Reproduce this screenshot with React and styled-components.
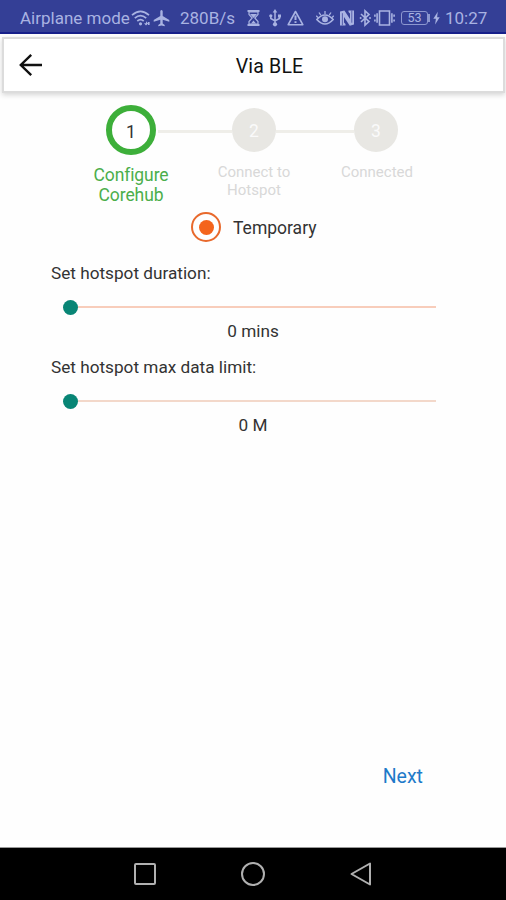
import styled, {createGlobalStyle} from 'styled-components';

const App = () => {
    return(
        <Screen>
            <GlobalStyle />
            <StatusBar />
            <Header>
                <HeaderCard>
                    <BackButton aria-label="Back">
                        <svg width="24" height="24" viewBox="0 0 24 24">
                            <path d="M23 12H2M12.2 1.8L1.8 12l10.4 10.2" fill="none" stroke="#111" strokeWidth="2.4" />
                        </svg>
                    </BackButton>
                    <Title>Via BLE</Title>
                </HeaderCard>
            </Header>
            <Content>
                <Stepper>
                    <Step>
                        <StepTrack>
                            <Line $hidden />
                            <StepCircle $active>1</StepCircle>
                            <Line $gap />
                        </StepTrack>
                        <StepLabel $active>Configure<br />Corehub</StepLabel>
                    </Step>
                    <Step>
                        <StepTrack>
                            <Line />
                            <StepCircle>2</StepCircle>
                            <Line />
                        </StepTrack>
                        <StepLabel>Connect to<br />Hotspot</StepLabel>
                    </Step>
                    <Step>
                        <StepTrack>
                            <Line />
                            <StepCircle>3</StepCircle>
                            <Line $hidden />
                        </StepTrack>
                        <StepLabel>Connected</StepLabel>
                    </Step>
                </Stepper>
                <RadioRow>
                    <Radio><Dot /></Radio>
                    <RadioLabel>Temporary</RadioLabel>
                </RadioRow>
                <SliderField label="Set hotspot duration:" value="0 mins" color="#f8cdbb" />
                <SliderField label="Set hotspot max data limit:" value="0 M" color="#f3d8ca" />
                <NextButton>Next</NextButton>
            </Content>
            <NavBar>
                <svg width="24" height="26" viewBox="0 0 24 26">
                    <rect x="2" y="3" width="20" height="20" rx="1" />
                </svg>
                <svg width="26" height="26" viewBox="0 0 26 26">
                    <circle cx="13" cy="13" r="11" />
                </svg>
                <svg width="24" height="26" viewBox="0 0 24 26">
                    <path d="M21 2.5v21L2.5 13z" />
                </svg>
            </NavBar>
        </Screen>
    );
}

const SliderField = ({label, value, color}) => {
    return(
        <Field>
            <FieldLabel>{label}</FieldLabel>
            <Slider>
                <Thumb />
                <Track $color={color} />
            </Slider>
            <FieldValue>{value}</FieldValue>
        </Field>
    );
}

const StatusBar = () => {
    return(
        <Status>
            <StatusText $width="111px">Airplane mode</StatusText>
            {/* wifi */}
            <StatusIcon width="20" height="18" viewBox="0 0 20 18">
                <g fill="none" stroke="currentColor" strokeWidth="1.7">
                    <path d="M1 6.2Q9.5 -1.6 18 6.2" />
                    <path d="M3.8 9.2Q9.5 4 15.2 9.2" />
                    <path d="M6.3 12Q9.5 9.2 12.7 12" />
                </g>
                <circle cx="9.5" cy="14.8" r="1.6" />
                <path d="M13 14.2h2v-2l2.2 2.2-2.2 2.2zM17 13h1.6v3H17z" />
            </StatusIcon>
            {/* airplane */}
            <StatusIcon $left="2px" width="17" height="18" viewBox="0 0 17 18">
                <path d="M8.5 1C7.7 1 7.3 1.8 7.3 2.6v4.3L.7 11v1.8l6.6-2v3.7l-2 1.5v1.3l3.2-.8 3.2.8V16l-2-1.5v-3.7l6.6 2V11L9.7 6.9V2.6C9.7 1.8 9.3 1 8.5 1z" />
            </StatusIcon>
            <StatusText $left="10px" $width="58px">280B/s</StatusText>
            {/* hourglass */}
            <StatusIcon $left="9px" width="13" height="18" viewBox="0 0 13 18">
                <path d="M.5 1h12v2H.5zM.5 15h12v2H.5z" />
                <path d="M2 3v2.4L5.2 9 2 12.6V15h9v-2.4L7.8 9 11 5.4V3z" fill="none" stroke="currentColor" strokeWidth="1.2" />
                <path d="M3 5h7L6.5 9zM6.5 11.5L9 14.5H4z" />
            </StatusIcon>
            {/* usb */}
            <StatusIcon $left="9px" width="12" height="18" viewBox="0 0 12 18">
                <path d="M6 0l2.3 3.6H3.7zM9 5.4h3v3.2H9z" />
                <circle cx="1.8" cy="6.8" r="1.6" />
                <circle cx="6" cy="15.3" r="2.1" />
                <path d="M6 3v12M1.8 7v2.5L6 12l4.5-2.5V7" fill="none" stroke="currentColor" strokeWidth="1.5" />
            </StatusIcon>
            {/* warning */}
            <StatusIcon $left="6px" width="17" height="18" viewBox="0 0 17 18">
                <path d="M8.5 2.5L1.2 15.7h14.6z" fill="none" stroke="currentColor" strokeWidth="1.6" strokeLinejoin="round" />
                <path d="M7.5 6.5h2V11h-2zM7.5 12.2h2V14h-2z" />
            </StatusIcon>
            {/* eye */}
            <StatusIcon $left="12px" width="18" height="18" viewBox="0 0 18 18">
                <path d="M.8 10.5Q9 1.5 17.2 10.5 9 19.5.8 10.5z" fill="none" stroke="currentColor" strokeWidth="1.6" />
                <circle cx="9" cy="10.3" r="3" />
                <path d="M9 5V2M4.8 6.2L3 3.5M13.2 6.2L15 3.5M2 8.6L.3 6.8M16 8.6l1.7-1.8" stroke="currentColor" strokeWidth="1.3" />
            </StatusIcon>
            {/* nfc */}
            <StatusIcon $left="5px" width="16" height="18" viewBox="0 0 16 18">
                <path d="M1 2.5L5.4 1.5 11 10V4.6L9.5 3V1.5H15v14L10.8 16.8 5 8v5.5L6.5 15v1.5H1z" />
                <path d="M3.4 4.2v12M12.8 1.5v12.2" stroke="#343f96" strokeWidth=".7" />
            </StatusIcon>
            {/* bluetooth */}
            <StatusIcon $left="4px" width="13" height="18" viewBox="0 0 13 18">
                <path d="M2 5l8 7.6L6 16.2V1.8l4 3.6L2 13" fill="none" stroke="currentColor" strokeWidth="1.6" />
                <circle cx="1.6" cy="9" r="1" />
                <circle cx="11" cy="9" r="1" />
            </StatusIcon>
            {/* vibrate */}
            <StatusIcon $left="2px" width="21" height="18" viewBox="0 0 21 18">
                <path d="M5.5 2h10v14h-10zM3.1 4.2v9.6M.9 5.6v2.2M.9 10.4v2.2M17.9 4.2v9.6M20.1 5.6v2.2M20.1 10.4v2.2" fill="none" stroke="currentColor" strokeWidth="1.6" />
            </StatusIcon>
            <Battery>53</Battery>
            <BatteryTip />
            {/* charging bolt */}
            <StatusIcon $left="3px" width="7" height="18" viewBox="0 0 7 18">
                <path d="M4.8 2.8L.3 9.8h2.6l-.8 5.8 4.6-7.4H4.1z" />
            </StatusIcon>
            <StatusText $left="5px">10:27</StatusText>
        </Status>
    );
}

const GlobalStyle = createGlobalStyle`
    body {
        margin: 0;
        background: #fff;
        font-family: Roboto, "Liberation Sans", sans-serif;
    }
    * {
        box-sizing: border-box;
    }
    button {
        padding: 0;
        border: 0;
        background: none;
        font-family: inherit;
    }
`

const Screen = styled.div`
    display: flex;
    flex-direction: column;
    height: 900px;
    overflow: hidden;
    background: #fefefe;
`

const Status = styled.div`
    display: flex;
    align-items: center;
    flex: none;
    height: 34px;
    padding: 3px 0 0 20px;
    border-bottom: 2px solid #17208a;
    background: #343f96;
    color: #a9b3e2;
`

const StatusText = styled.span`
    flex: none;
    width: ${props => props.$width || 'auto'};
    margin-left: ${props => props.$left || 0};
    font-size: 17px;
    line-height: 20px;
    white-space: nowrap;
`

const StatusIcon = styled.svg`
    flex: none;
    margin-left: ${props => props.$left || 0};
    fill: currentColor;
`

const Battery = styled.span`
    width: 27px;
    height: 14px;
    margin-left: 6px;
    border: 1px solid #8c97d0;
    border-radius: 3px;
    font-size: 12.5px;
    line-height: 12px;
    text-align: center;
`

const BatteryTip = styled.span`
    width: 2px;
    height: 8px;
    background: #8c97d0;
`

const Header = styled.header`
    flex: none;
    height: 63px;
    padding: 5px 3px 6px 4px;
`

const HeaderCard = styled.div`
    display: flex;
    align-items: center;
    height: 52px;
    background: #fff;
    box-shadow: 0 0 0 2px #dcdcdc, 0 2px 5px 2px rgba(0, 0, 0, 0.16);
`

const BackButton = styled.button`
    width: 24px;
    height: 24px;
    margin: 0 0 1px 15px;
`

const Title = styled.h1`
    flex: 1;
    margin: 2px 39px 0 0;
    padding-left: 32px;
    color: #111;
    font-size: 19.5px;
    font-weight: 400;
    letter-spacing: 0.2px;
    text-align: center;
`

const Content = styled.main`
    display: flex;
    flex: 1;
    flex-direction: column;
    padding: 8px 51px 0;
`

const Stepper = styled.div`
    display: flex;
    align-self: center;
    width: 369px;
    height: 104px;
    margin-left: 2px;
`

const Step = styled.div`
    flex: 1;
`

const StepTrack = styled.div`
    display: flex;
    align-items: center;
    height: 50px;
`

const Line = styled.div`
    flex: 1;
    height: 3px;
    margin: 2px 0 0 ${props => props.$gap ? '2px' : 0};
    background: ${props => props.$hidden ? 'transparent' : '#efeee9'};
    /* keeps the circle centred next to the gap */
    ${props => props.$hidden && 'margin-left: 2px;'}
`

const StepCircle = styled.div`
    display: flex;
    align-items: center;
    justify-content: center;
    width: ${props => props.$active ? 50 : 44}px;
    height: ${props => props.$active ? 50 : 44}px;
    padding-top: ${props => props.$active ? 3 : 2}px;
    border: ${props => props.$active ? '6px solid #3daf3a' : '0'};
    border-radius: 50%;
    background: ${props => props.$active ? '#fff' : '#e8e7e3'};
    color: ${props => props.$active ? '#333' : '#fafafa'};
    font-size: 17.5px;
`

const StepLabel = styled.div`
    padding-top: ${props => props.$active ? 9.5 : 9}px;
    color: ${props => props.$active ? '#4bae4b' : '#d8d8d8'};
    font-size: ${props => props.$active ? 17.5 : 15}px;
    line-height: ${props => props.$active ? 20.5 : 17.6}px;
    letter-spacing: ${props => props.$active ? -0.1 : 0}px;
    text-align: center;
`

const RadioRow = styled.div`
    display: flex;
    align-items: center;
    height: 36px;
    padding-left: 140px;
`

const Radio = styled.div`
    display: flex;
    align-items: center;
    justify-content: center;
    width: 30px;
    height: 30px;
    border: 2px solid #e8692c;
    border-radius: 50%;
`

const Dot = styled.div`
    width: 15px;
    height: 15px;
    border-radius: 50%;
    background: #f4641c;
`

const RadioLabel = styled.span`
    margin: 2px 0 0 12px;
    color: #333;
    font-size: 17.5px;
`

const Field = styled.div`
    height: 94px;
    padding-top: 18px;
`

const FieldLabel = styled.div`
    color: #333;
    font-size: 17.2px;
    line-height: 20px;
`

const Slider = styled.div`
    display: flex;
    align-items: center;
    height: 16px;
    margin: 16px 19px 0 12px;
`

const Thumb = styled.div`
    width: 15px;
    height: 15px;
    border-radius: 50%;
    background: #088575;
`

const Track = styled.div`
    flex: 1;
    height: 2px;
    background: ${props => props.$color};
`

const FieldValue = styled.div`
    padding: 6px 0 0;
    color: #333;
    font-size: 17.2px;
    line-height: 20px;
    text-align: center;
`

const NextButton = styled.button`
    align-self: flex-end;
    margin: auto 32px 59px 0;
    color: #1e7ac9;
    font-size: 19.5px;
    line-height: 23px;
`

const NavBar = styled.nav`
    display: flex;
    align-items: center;
    justify-content: space-between;
    flex: none;
    height: 53px;
    padding: 0 133px 0 133px;
    border-top: 1px solid #999;
    background: #000;
    svg {
        fill: none;
        stroke: #b0b0b0;
        stroke-width: 2;
        stroke-linejoin: round;
    }
`

export default App;
